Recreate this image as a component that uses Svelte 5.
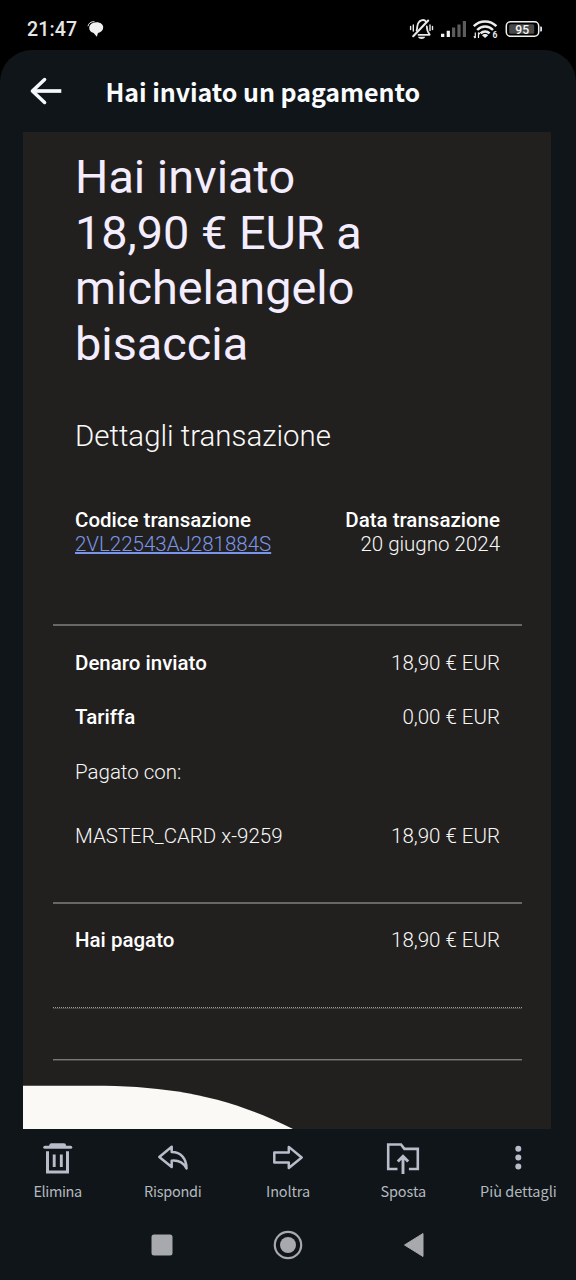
<script>
  const amounts = [
    { label: 'Denaro inviato', value: '18,90 € EUR', strong: true, gap: 25 },
    { label: 'Tariffa', value: '0,00 € EUR', strong: true, gap: 30 },
    { label: 'Pagato con:', value: '', strong: false, gap: 31 },
    { label: 'MASTER_CARD x-9259', value: '18,90 € EUR', strong: false, gap: 40 }
  ];
  const actions = [
    { id: 'trash', label: 'Elimina', spacing: -0.4 },
    { id: 'reply', label: 'Rispondi', spacing: -0.25 },
    { id: 'forward', label: 'Inoltra', spacing: -0.15 },
    { id: 'move', label: 'Sposta', spacing: -0.1 },
    { id: 'more', label: 'Più dettagli', spacing: 0 }
  ];
</script>

<div class="screen">
  <div class="status">
    <span class="clock">21:47</span>
    <svg class="bubble" width="18" height="18" viewBox="0 0 18 18">
      <path d="M9.500 2.200c4 0 6.700 2.200 6.700 5.200 0 2.900-2.200 4.900-5.200 5.500L9.800 16.800 6.600 12.900C4 12.500 2.200 10.500 2.200 7.800c0-1.300.4-2.200 1-2.900C4.600 3.200 6.700 2.200 9.500 2.200z" fill="#f0f0f0" />
      <path d="M1 6.200C1.400 3.300 4 1.300 7.500 1.700" fill="none" stroke="#e6e6e6" stroke-width="1" />
    </svg>
    <svg class="sys" width="136" height="24" viewBox="408 17 136 24">
      <g fill="none" stroke="#e8e8e8" stroke-width="1.800" stroke-linecap="round">
        <path d="M418.500 34.800H429.500M416.600 30.500c.5-1.600.5-3 .8-4.700 1-6.300 6.800-7 8.600-4M426.800 26.500c.1 3 .6 5.500 2.900 8" />
        <path d="M413.200 36.200 428.200 20.500" stroke-width="2.100" />
        <path d="M410.600 26.500v3M413.300 25v6M430 25v5.500M432.500 26.500v3" stroke-width="1.400" />
      </g>
      <path d="M418 36.700h7.200c-.8 3-6.400 3-7.200 0z" fill="#e8e8e8" />
      <path d="M441 33.700h3.300V37H441zM446.700 30.700h3.200V37h-3.200z" fill="#f2f2f2" />
      <path d="M452 27.500h3.200V37h-3.200zM457.400 24.500h3.200V37h-3.200zM462.800 21h3.200v16h-3.200z" fill="#5c5c5c" />
      <g fill="none" stroke="#ececec" stroke-width="2.500">
        <path d="M473.800 26.200c6-6.400 16.400-6.400 22.600 0M477.200 30c4.500-4.600 11.300-4.600 15.800 0M480.600 33.400c2.500-2.600 6.500-2.600 9 0" />
      </g>
      <path d="M482 35.300c1.600-1.800 4.600-1.800 6.200 0L485.100 38z" fill="#ececec" />
      <path d="M475.300 38v-5.500M473.800 36.300l1.500 1.700M478.500 32.500V38M478.500 32.500l1.400 1.600" fill="none" stroke="#ececec" stroke-width="1.200" />
      <text x="492.600" y="38.200" font-size="8.500" font-weight="700" fill="#ececec">6</text>
      <rect x="506.300" y="21.700" width="32.400" height="14.600" rx="4.200" fill="none" stroke="#f0f0f0" stroke-width="1.500" />
      <rect x="509.200" y="24.300" width="25" height="9.500" rx="1.500" fill="#484848" />
      <path d="M540.200 26.500h.8q1 0 1 1v3q0 1-1 1h-.8z" fill="#e8e8e8" />
      <text x="515.300" y="33.500" font-size="12.200" font-weight="500" fill="#f4f4f4">95</text>
    </svg>
  </div>

  <div class="app">
    <header>
      <svg width="34" height="30" viewBox="0 0 34 30" fill="none" stroke="#f5f8fa" stroke-width="3.700">
        <path d="M3.500 15H32.300" />
        <path d="M15.600 3.500 3.400 15l12.200 11.500" stroke-linecap="round" stroke-linejoin="round" stroke-width="3.500" />
      </svg>
      <h1>Hai inviato un pagamento</h1>
    </header>

    <main>
      <h2>Hai inviato<br />18,90 € EUR a<br />michelangelo<br />bisaccia</h2>
      <h3>Dettagli transazione</h3>
      <div class="row meta">
        <div>
          <b>Codice transazione</b>
          <span class="link">2VL22543AJ281884S</span>
        </div>
        <div class="right">
          <b>Data transazione</b>
          <span>20 giugno 2024</span>
        </div>
      </div>
      <hr />
      {#each amounts as a}
        <div class="row" style="margin-top:{a.gap}px">
          <span class:strong={a.strong}>{a.label}</span>
          <span>{a.value}</span>
        </div>
      {/each}
      <hr class="second" />
      <div class="row paid">
        <span class="strong">Hai pagato</span>
        <span>18,90 € EUR</span>
      </div>
      <div class="dotted"></div>
      <div class="thin"></div>
      <svg class="curve" width="528" height="44" viewBox="0 0 528 44">
        <path d="M0 .7H70C145 .7 205 11 270 44H0z" fill="#faf9f6" />
      </svg>
    </main>

    <nav class="tools">
      {#each actions as t}
        <div class="tool">
          <svg width="36" height="34" viewBox="0 0 36 34" fill="none" stroke="#b8bdc9" stroke-width="2.700">
            {#if t.id === 'trash'}
              <path d="M4.800 5.200H30.700" stroke-width="3" stroke-linecap="round" />
              <path d="M9.300 4.500V3.200q0-2 2-2h12.700q2 0 2 2v1.300z" fill="#b8bdc9" stroke="none" />
              <path d="M7.500 9.200V30H27.500V9.200" stroke-width="3" />
              <path d="M14.200 12.500V25M21.300 12.500V25" stroke-width="2.900" />
            {:else if t.id === 'reply'}
              <path d="M16.700 4.800 4.300 15l12.400 10v-6.300c7-.6 11.500 1.700 14.800 7.700 0-9.600-5.500-16.400-14.800-16.400z" stroke-width="2.500" stroke-linejoin="round" />
            {:else if t.id === 'forward'}
              <path d="M18.800 4.900 31.700 15.500 18.800 26v-5.500H4.300v-10h14.500z" stroke-width="2.500" stroke-linejoin="round" />
            {:else if t.id === 'move'}
              <path d="M12.500 27H3.200V2.500H16l3.400 4.400h13.400V27h-8.900" stroke-width="2.600" />
              <path d="M18 32V15M12.800 19.500 18 14.200l5.200 5.300" stroke-width="2.900" />
            {:else}
              <g fill="#b8bdc9" stroke="none">
                <circle cx="18.300" cy="6.700" r="3" /><circle cx="18.300" cy="15.600" r="3" /><circle cx="18.300" cy="24.400" r="3" />
              </g>
            {/if}
          </svg>
          <span style="letter-spacing:{t.spacing}px">{t.label}</span>
        </div>
      {/each}
    </nav>

    <div class="system">
      <svg width="30" height="30" viewBox="0 0 30 30"><rect x="4.500" y="4.500" width="21" height="21" rx="2.500" fill="#a8a9ac" /></svg>
      <svg width="30" height="30" viewBox="0 0 30 30">
        <circle cx="15" cy="15" r="13.200" fill="none" stroke="#a8a9ac" stroke-width="2.200" />
        <circle cx="15" cy="15" r="8" fill="#a8a9ac" />
      </svg>
      <svg width="30" height="30" viewBox="0 0 30 30"><path d="M5.500 15 24 3.500V26.500z" fill="#a8a9ac" stroke="#a8a9ac" stroke-linejoin="round" /></svg>
    </div>
  </div>
</div>

<style>
  :global(body) { margin: 0; background: #000; }
  .screen {
    width: 576px; height: 1280px; background: #000; overflow: hidden;
    display: flex; flex-direction: column; font-family: Roboto, sans-serif; color: #fff;
  }
  svg { display: block; flex: none; }
  .status { height: 50px; display: flex; align-items: flex-start; flex: none; box-sizing: border-box; padding-left: 27px; }
  .clock { width: 60px; margin-top: 17px; font-size: 19.600px; line-height: 25px; color: #e6e6e6; font-weight: 500; letter-spacing: .1px; }
  .bubble { margin-top: 20px; }
  .sys { margin: 17px 32px 0 auto; font-family: Roboto, sans-serif; }
  .app { flex: 1; background: #0f1518; border-radius: 32px 32px 0 0; display: flex; flex-direction: column; }
  header { height: 82px; display: flex; align-items: center; padding-left: 29px; flex: none; }
  h1 {
    margin: 0 0 0 42.500px; font: 700 25px/36px "Noto Sans CJK SC", sans-serif;
    color: #fafcff; white-space: nowrap; letter-spacing: -.06px;
  }
  main { width: 528px; height: 997px; margin-left: 23px; background: #22201f; flex: none; display: flex; flex-direction: column; }
  h2 { margin: 18px 0 0 52px; font-weight: 400; font-size: 46.800px; line-height: 55.700px; color: #f3edff; }
  h3 { margin: 45px 0 0 52px; font-weight: 300; font-size: 29.400px; line-height: 36px; color: #fafafa; }
  .row { display: flex; justify-content: space-between; margin: 0 51px 0 52px; font-size: 20.500px; line-height: 24px; font-weight: 300; color: #f8f8f8; white-space: nowrap; }
  .row b, .strong { font-weight: 500; color: #fff; }
  .row b, .row b + span { display: block; }
  .meta { margin-top: 54px; }
  .right { text-align: right; }
  .row .link { color: #7b96e8; text-decoration: underline; text-decoration-thickness: 1.500px; text-underline-offset: 1px; }
  hr { border: 0; height: 2px; background: #686766; margin: 68.500px 29px 0 30px; flex: none; }
  hr.second { margin-top: 54px; }
  .paid { margin-top: 24px; }
  .dotted { margin: 55px 29px 0 30px; height: 0; border-top: 1px dotted #999; border-bottom: 1px solid #444342; }
  .thin { margin: 50px 29px 0 30px; height: 1px; background: #7a7978; border-bottom: 1px solid #454443; }
  .curve { margin-top: auto; }
  .tools { display: grid; grid-template-columns: repeat(5, 1fr); padding-top: 13px; height: 68px; flex: none; }
  .tool { display: flex; flex-direction: column; align-items: center; }
  .tool span { font: 400 14.500px/22px "Noto Sans CJK SC", sans-serif; color: #b4b9bf; margin-top: 4px; white-space: nowrap; }
  .system { display: flex; gap: 96px; margin: 20px 0 0 146.500px; }
</style>
